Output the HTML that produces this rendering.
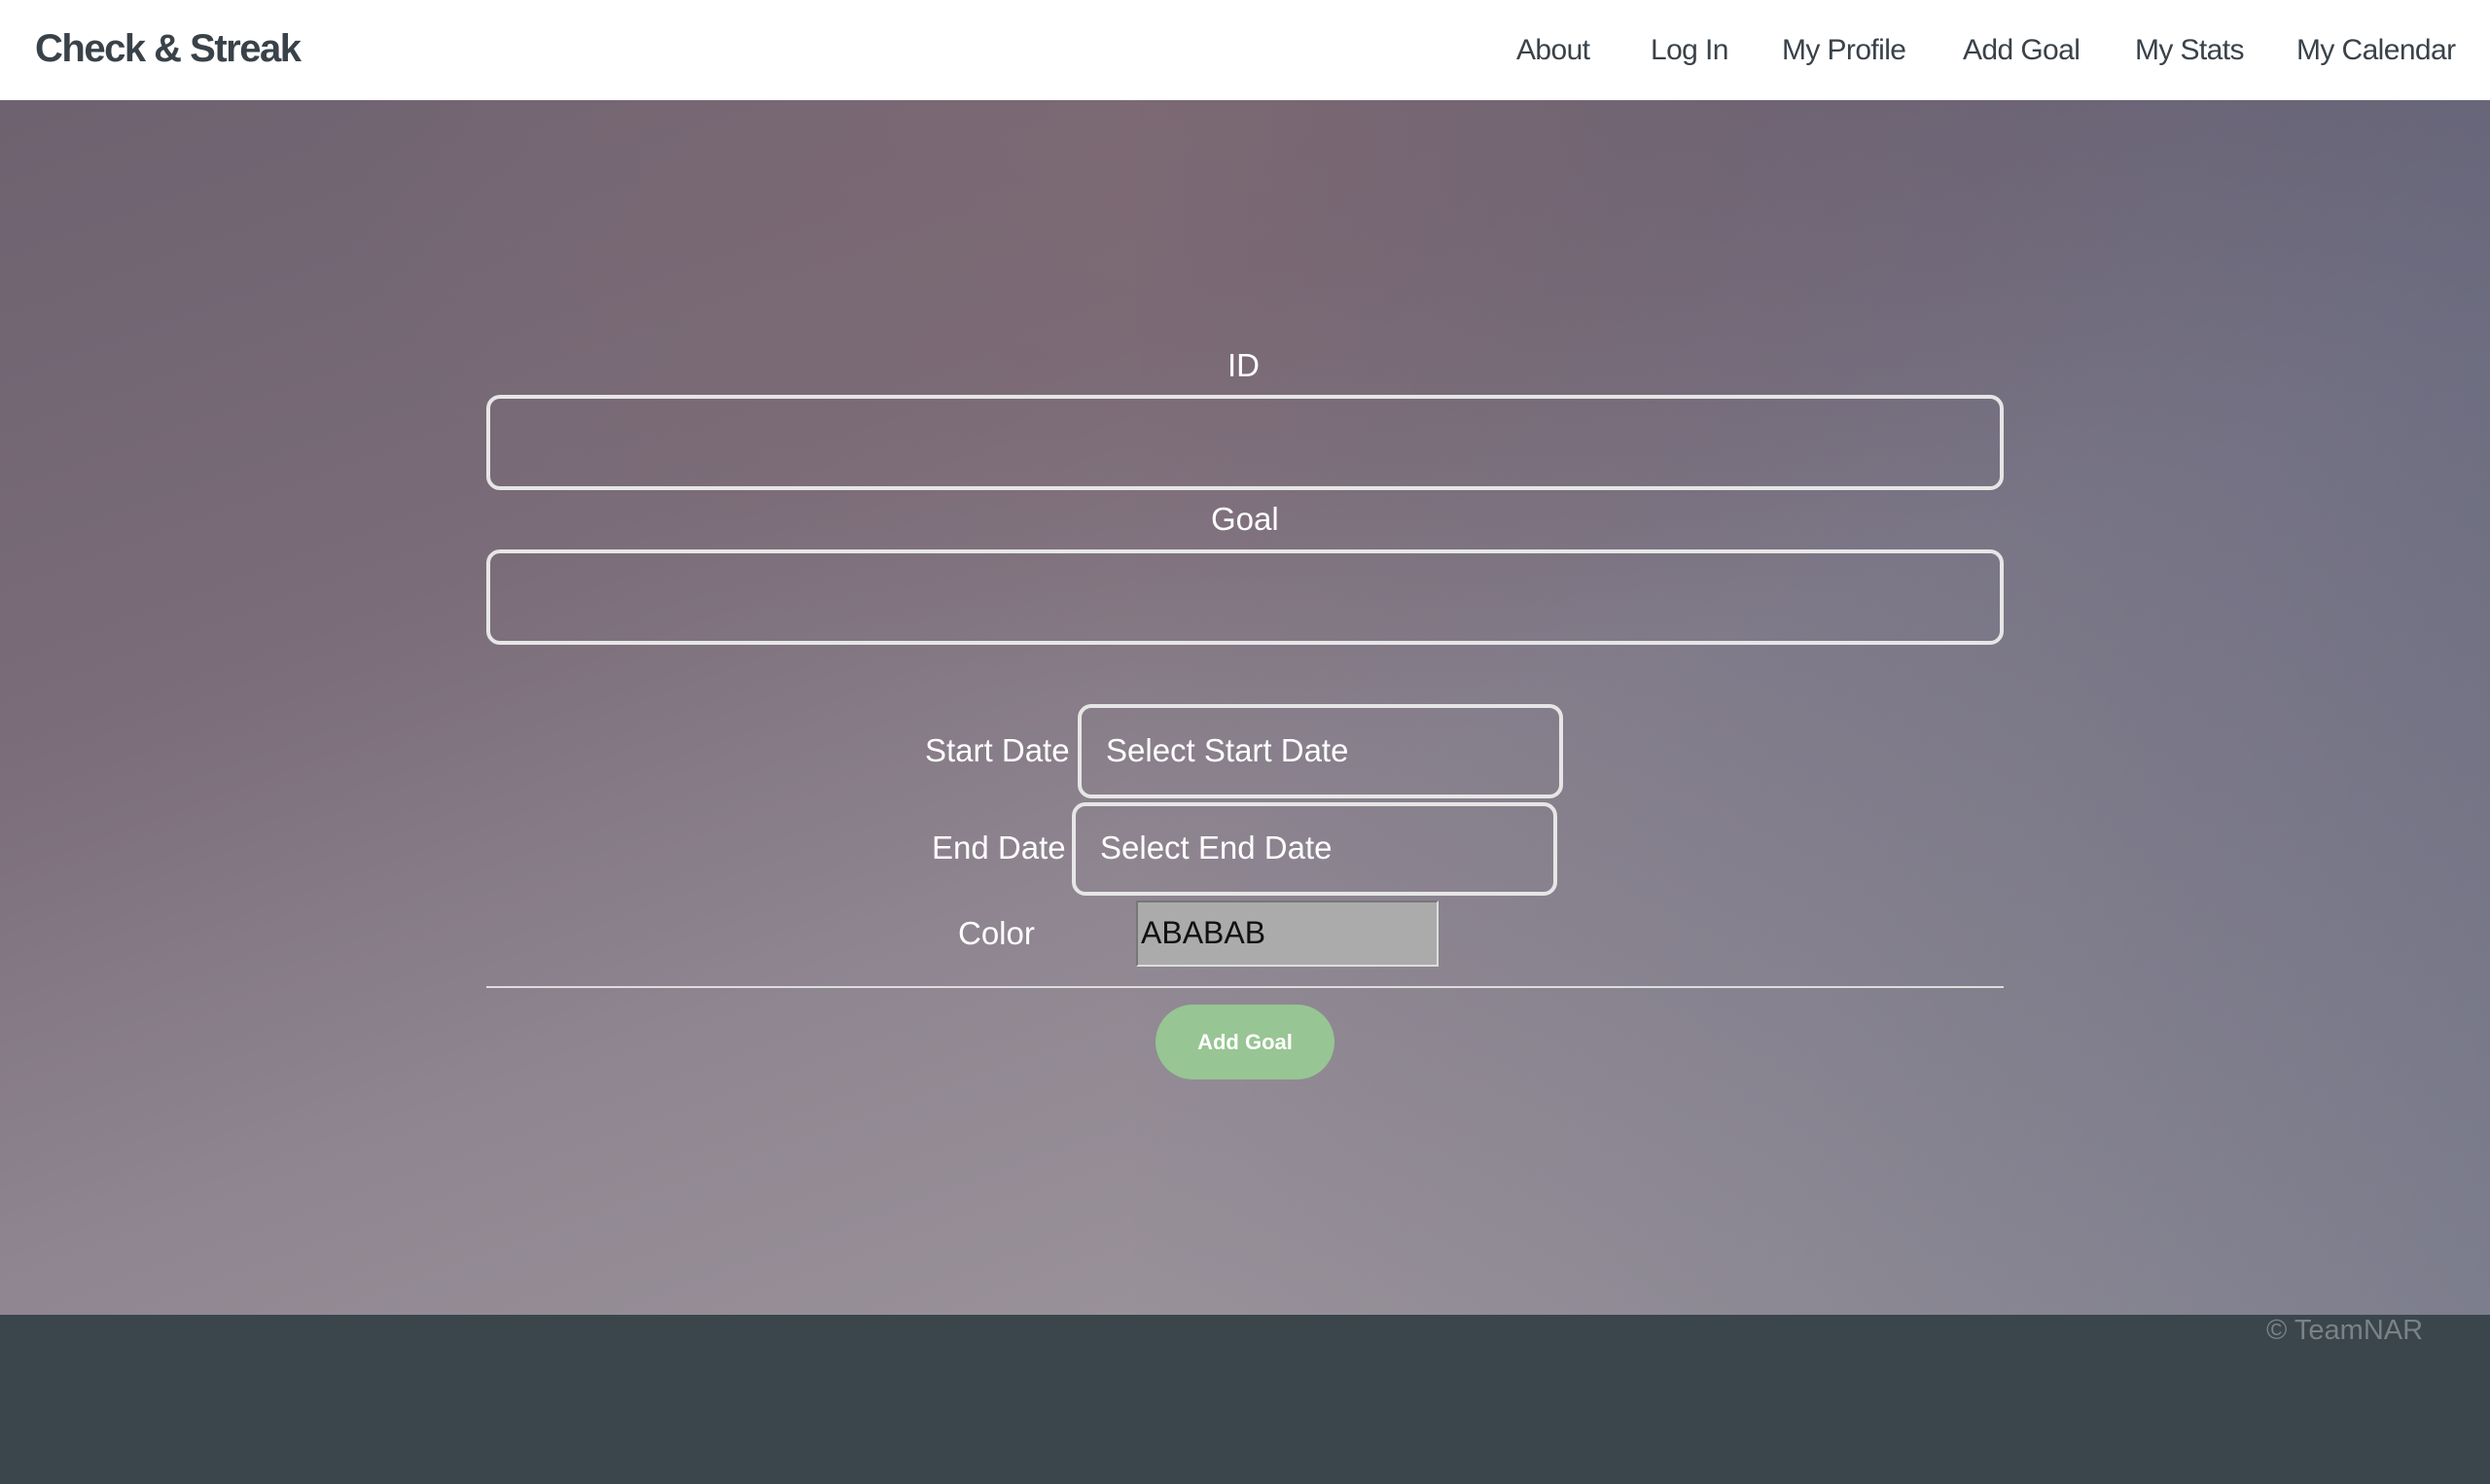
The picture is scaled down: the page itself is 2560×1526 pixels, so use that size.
<!DOCTYPE html>
<html><head><meta charset="utf-8"><style>
*{margin:0;padding:0;box-sizing:border-box}
html,body{width:2560px;height:1526px;overflow:hidden;font-family:"Liberation Sans",sans-serif}
.nav{position:absolute;left:0;top:0;width:2560px;height:103px;background:#fff}
.logo{position:absolute;left:36px;top:28px;font-size:40px;font-weight:bold;color:#3a4249;letter-spacing:-1.5px}
.nl{position:absolute;top:35px;font-size:30px;color:#3a4249;letter-spacing:-0.6px;white-space:nowrap}
.main{position:absolute;left:0;top:103px;width:2560px;height:1249px;
background:
radial-gradient(ellipse 1400px 900px at 1300px 0px, rgba(125,105,115,0.9), rgba(125,105,115,0) 70%),
linear-gradient(160deg,#6e6270 0%,#7a6c78 30%,#8e8590 55%,#a59ea3 100%);}
.main:after{content:"";position:absolute;inset:0;background:linear-gradient(90deg,rgba(0,0,0,0) 45%,rgba(50,65,100,0.35) 100%)}
.foot{position:absolute;left:0;top:1352px;width:2560px;height:174px;background:#3a454c}
.copy{position:absolute;left:2330px;top:1352px;font-size:29px;color:#7b8287}
.lab{position:absolute;color:#fff;font-size:33px;white-space:nowrap}
.box{position:absolute;border:4px solid #e6e6e6;border-radius:14px}
.ph{position:absolute;color:#fff;font-size:33px;white-space:nowrap}
</style></head><body>
<div class="nav">
<div class="logo">Check &amp; Streak</div>
<span class="nl" style="left:1559px">About</span>
<span class="nl" style="left:1697px">Log In</span>
<span class="nl" style="left:1832px">My Profile</span>
<span class="nl" style="left:2018px">Add Goal</span>
<span class="nl" style="left:2195px">My Stats</span>
<span class="nl" style="left:2361px">My Calendar</span>
</div>
<div class="main"></div>
<div class="lab" style="left:1262px;top:357px">ID</div>
<div class="box" style="left:500px;top:406px;width:1560px;height:98px"></div>
<div class="lab" style="left:1245px;top:515px">Goal</div>
<div class="box" style="left:500px;top:565px;width:1560px;height:98px"></div>
<div class="lab" style="left:951px;top:753px">Start Date</div>
<div class="box" style="left:1108px;top:724px;width:499px;height:97px"></div>
<div class="ph" style="left:1137px;top:753px">Select Start Date</div>
<div class="lab" style="left:958px;top:853px">End Date</div>
<div class="box" style="left:1102px;top:825px;width:499px;height:96px"></div>
<div class="ph" style="left:1131px;top:853px">Select End Date</div>
<div class="lab" style="left:985px;top:941px">Color</div>
<div style="position:absolute;left:1168px;top:926px;width:311px;height:68px;background:#ababab;border:2px solid;border-color:#777 #ddd #ddd #777"></div>
<div style="position:absolute;left:1173px;top:941px;font-size:32px;color:#111">ABABAB</div>
<div style="position:absolute;left:500px;top:1014px;width:1560px;height:2px;background:#ddd"></div>
<div style="position:absolute;left:1188px;top:1033px;width:184px;height:77px;border-radius:39px;background:#97c593;color:#fff;font-weight:bold;font-size:22px;text-align:center;line-height:77px">Add Goal</div>
<div class="foot"></div>
<div class="copy">© TeamNAR</div>
</body></html>
